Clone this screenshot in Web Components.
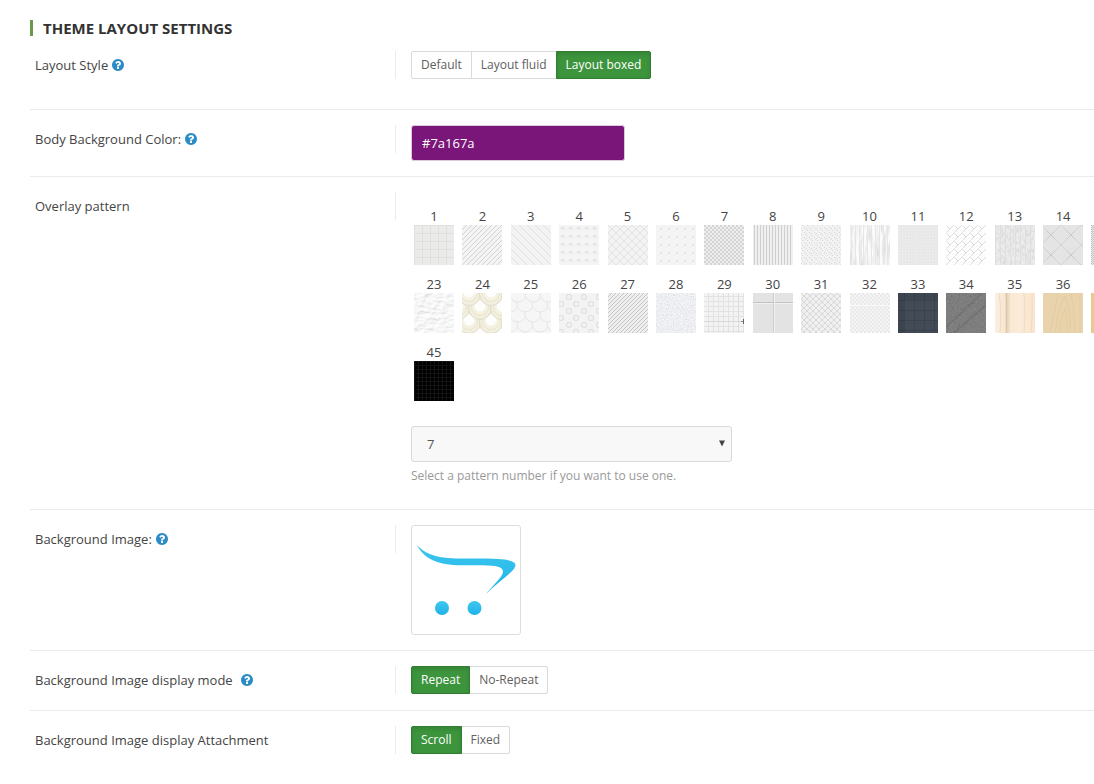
<!DOCTYPE html>
<html lang="en">
<head>
<meta charset="utf-8">
<title>Theme layout settings</title>
<style>
  body { margin: 0; background: #fff; color: #444; font: 13px/18px "Open Sans", sans-serif; }
</style>
</head>
<body>
<settings-panel heading="THEME LAYOUT SETTINGS">
  <setting-row label="Layout Style" help class="first">
    <button-group label="Layout Style" options="Default|Layout fluid|Layout boxed" value="Layout boxed"></button-group>
  </setting-row>
  <setting-row label="Body Background Color:" help>
    <color-field label="Body Background Color" value="#7a167a"></color-field>
  </setting-row>
  <setting-row label="Overlay pattern">
    <pattern-picker></pattern-picker>
  </setting-row>
  <setting-row label="Background Image:" help>
    <image-picker></image-picker>
  </setting-row>
  <setting-row label="Background Image display mode" help="wide">
    <button-group label="Background Image display mode" options="Repeat|No-Repeat" value="Repeat"></button-group>
  </setting-row>
  <setting-row label="Background Image display Attachment">
    <button-group label="Background Image display Attachment" options="Scroll|Fixed" value="Scroll"></button-group>
  </setting-row>
</settings-panel>

<script>
class SettingsPanel extends HTMLElement {
  constructor() {
    super();
    this.attachShadow({ mode: 'open' }).innerHTML = `
      <style>
        :host { display: block; padding: 20px 0 15px 30px; }
        h2 { margin: 0; border-left: 3px solid #6a994e; padding-left: 10px; font-size: 15px; line-height: 16px; font-weight: 700; color: #333; }
      </style>
      <section><h2>${this.getAttribute('heading')}</h2><slot></slot></section>`;
  }
}

class HelpIcon extends HTMLElement {
  constructor() {
    super();
    this.attachShadow({ mode: 'open' }).innerHTML = `
      <style>
        :host { display: inline-flex; color: #2b8bc6; }
        svg { display: block; }
      </style>
      <svg width="12" height="12" viewBox="128 128 1536 1536" fill="currentColor" role="img" aria-label="Help"><path d="M1024 1376v-192q0-14-9-23t-23-9h-192q-14 0-23 9t-9 23v192q0 14 9 23t23 9h192q14 0 23-9t9-23zM1280 704q0-88-55.500-163t-138.500-116-170-41q-243 0-371 213-15 24 8 42l132 100q7 6 19 6 16 0 25-12 53-68 86-92 34-24 86-24 48 0 85.500 26t37.500 59q0 38-20 61t-68 45q-63 28-115.500 86.500t-52.500 125.500v36q0 14 9 23t23 9h192q14 0 23-9t9-23q0-19 21.500-49.500t54.500-49.500q32-18 49-28.500t46-35 44.500-48 28-60.500 12.500-81zM1664 896q0 209-103 385.500t-279.500 279.500-385.500 103-385.500-103-279.500-279.500-103-385.500 103-385.500 279.500-279.500 385.500-103 385.500 103 279.500 279.500 103 385.500z"/></svg>`;
  }
}

class SettingRow extends HTMLElement {
  constructor() {
    super();
    const help = this.getAttribute('help');
    this.attachShadow({ mode: 'open' }).innerHTML = `
      <style>
        :host { display: grid; grid-template-columns: 365px minmax(0, 1fr); padding: 15px 0; border-top: 1px solid #ebebeb; }
        :host(.first) { border-top: 0; padding-bottom: 29px; }
        .label { display: flex; align-items: center; gap: 4px; height: 28px; padding-left: 5px; border-right: 1px solid #ebebeb; margin-right: -1px; }
        .label.wide { gap: 8px; }
        .control { padding-left: 16px; min-height: 29px; }
      </style>
      <div class="label ${help || ''}"><span>${this.getAttribute('label')}</span>${help === null ? '' : '<help-icon></help-icon>'}</div>
      <div class="control"><slot></slot></div>`;
  }
}

class ButtonGroup extends HTMLElement {
  constructor() {
    super();
    const value = this.getAttribute('value');
    this.attachShadow({ mode: 'open' }).innerHTML = `
      <style>
        :host { display: block; }
        div { display: flex; }
        button { height: 28px; margin: 0; padding: 0 9px; border: 1px solid #dadada; background: #fff; color: #606060; font: 12px/18px "Open Sans", sans-serif; }
        button + button { margin-left: -1px; }
        button:first-child { border-radius: 2px 0 0 2px; }
        button:last-child { border-radius: 0 2px 2px 0; }
        button[aria-pressed=true] { position: relative; background: #3c943c; border-color: #2f7d30; color: #fff; box-shadow: inset 0 2px 4px rgba(0,0,0,.12); }
      </style>
      <div role="group" aria-label="${this.getAttribute('label')}">${this.getAttribute('options').split('|').map(o =>
        `<button type="button" aria-pressed="${o === value}">${o}</button>`).join('')}</div>`;
    this.shadowRoot.querySelector('div').addEventListener('click', e => {
      if (e.target.tagName !== 'BUTTON') return;
      for (const b of this.shadowRoot.querySelectorAll('button')) b.setAttribute('aria-pressed', b === e.target);
    });
  }
}

class ColorField extends HTMLElement {
  constructor() {
    super();
    const v = this.getAttribute('value');
    this.attachShadow({ mode: 'open' }).innerHTML = `
      <style>
        :host { display: block; }
        input { display: block; box-sizing: border-box; width: 214px; height: 36px; margin: 0; padding: 0 10px; border: 1px solid #d9cdd9; border-radius: 3px; color: #fff; font: 13px/18px "Open Sans", sans-serif; }
      </style>
      <input type="text" aria-label="${this.getAttribute('label')}" value="${v}" style="background:${v}">`;
  }
}

/* A tile repeated over the whole 40px swatch. */
const tile = (w, h, bg, art, extra = '') =>
  `<defs><pattern id="p" width="${w}" height="${h}" patternUnits="userSpaceOnUse" ${extra}>${art}</pattern></defs><rect width="40" height="40" fill="${bg}"/><rect width="40" height="40" fill="url(#p)"/>`;
/* Monochrome grain over a base colour. */
const grain = (bg, freq, strength, dark = 0, oct = 2) =>
  `<defs><filter id="n" x="0" y="0" width="100%" height="100%" color-interpolation-filters="sRGB"><feTurbulence type="fractalNoise" baseFrequency="${freq}" numOctaves="${oct}"/><feColorMatrix values="0 0 0 0 ${dark} 0 0 0 0 ${dark} 0 0 0 0 ${dark} ${strength} 0 0 0 ${-strength * 0.4}"/></filter></defs><rect width="40" height="40" fill="${bg}"/><rect width="40" height="40" filter="url(#n)"/>`;
const line = (d, c, w = 1) => `<path d="${d}" stroke="${c}" stroke-width="${w}" fill="none"/>`;
const box = (x, y, w, h, c) => `<rect x="${x}" y="${y}" width="${w}" height="${h}" fill="${c}"/>`;
/* Overlapping fish scales, the upper rows painted over the lower ones. */
const scales = (rows, dx, paint) => rows.map(([x0, y]) =>
  [0, 1, 2, 3].map(i => paint(x0 + i * dx, y)).join('')).join('');

const PATTERNS = {
  1: tile(8, 8, '#ebebe9', box(0, 0, 1, 8, '#e0e0dd') + box(0, 0, 8, 1, '#e0e0dd')),
  2: tile(5, 5, '#f4f4f4', line('M-1 6L6-1M-1 1L1-1M4 6L6 4', '#d2d2d2')),
  3: tile(8, 8, '#f3f3f3', line('M-1-1L9 9', '#e0e0e0')),
  4: tile(8, 8, '#f4f4f4', box(2, 2, 4, 3, '#ebebeb') + box(2, 2, 2, 2, '#e1e1e1')),
  5: tile(8, 8, '#f3f3f3', line('M0 0L8 8M8 0L0 8', '#e1e1e1')),
  6: tile(8, 8, '#f4f4f4', box(4, 3, 2, 2, '#e5e5e5')),
  7: tile(4, 4, '#eeeeee', box(0, 0, 2, 2, '#d4d4d4') + box(2, 2, 2, 2, '#d4d4d4')),
  8: tile(3, 3, '#f0f0f0', box(1, 0, 1, 3, '#cecece')),
  9: tile(5, 5, '#f2f2f2', box(1, 0, 1, 1, '#d8d8d8') + box(3, 2, 1, 1, '#d6d6d6') + box(0, 3, 1, 1, '#dadada') + box(4, 4, 1, 1, '#e0e0e0')),
  10: grain('#fbfbfb', '.3 .06', .3) + tile(4, 40, 'none', box(1, 0, 1, 40, '#e6e6e6')),
  11: tile(3, 3, '#e9e9e9', box(0, 0, 1, 1, '#e5e5e5') + box(1, 2, 1, 1, '#eeeeee')),
  12: tile(8, 8, '#fdfdfd', line('M0 8L8 0M1 1L4 4M-1 1L1-1M7 9L9 7', '#dcdcdc')),
  13: grain('#ececec', '.45 .25', .3, .3) + tile(5, 40, 'none', box(0, 0, 1, 40, '#dfdfdf')),
  14: tile(20, 20, '#e4e4e4', line('M0 0L20 20M20 0L0 20', '#d4d4d4') + line('M6 0L14 0M10-4L10 4', 'none') + line('M-4-4L4 4M-4 4L4-4M16-4L24 4M16 4L24-4M-4 16L4 24M-4 24L4 16M16 16L24 24M16 24L24 16', '#c9c9c9'), 'patternTransform="translate(8 10)"'),
  15: tile(2, 2, '#e8e8e8', box(0, 0, 1, 1, '#bdbdbd') + box(1, 1, 1, 1, '#cccccc')),
  23: `<defs><filter id="n" x="0" y="0" width="100%" height="100%"><feTurbulence type="fractalNoise" baseFrequency=".16 .3" numOctaves="3"/><feDiffuseLighting surfaceScale="1" lighting-color="#ffffff"><feDistantLight azimuth="240" elevation="68"/></feDiffuseLighting></filter></defs><rect width="40" height="40" filter="url(#n)"/>`,
  24: box(0, 0, 40, 40, '#faf8f0') + scales([[-4, 43], [-15, 29], [-4, 15], [-15, 1]], 22, (x, y) =>
    `<circle cx="${x}" cy="${y}" r="11.500" fill="#f2efdd" stroke="#dedccf"/><circle cx="${x}" cy="${y - 1}" r="8.500" fill="#f5f2e2" stroke="#e8e4cd"/><circle cx="${x}" cy="${y - 2}" r="5.500" fill="#fdfdfb"/>`),
  25: box(0, 0, 40, 40, '#f6f6f6') + scales([[-8, 40], [-1, 31], [-8, 21], [-1, 11], [-8, 1]], 15, (x, y) =>
    `<circle cx="${x}" cy="${y}" r="8" fill="#f6f6f6" stroke="#e6e6e6"/>`),
  26: tile(15, 14, '#f3f3f3', '<g fill="#f1f1f1" stroke="#dadada"><rect x="1.500" y="1.500" width="5" height="5" rx="2"/><rect x="8.500" y="8.500" width="5" height="5" rx="2"/></g>', 'patternTransform="translate(6 0)"'),
  27: tile(4, 4, '#efefef', line('M-1 5L5-1M-1 1L1-1M3 5L5 3', '#c4c4c4')),
  28: grain('#f4f5f8', '.8', .45, .45),
  29: tile(5, 5, '#f3f3f3', box(4, 0, 1, 5, '#e2e2e2') + box(0, 3, 5, 1, '#e2e2e2')) + box(0, 28, 40, 1, '#d6d6d6') + box(34, 0, 1, 40, '#dcdcdc') + box(37, 28, 3, 1, '#888') + box(39, 26, 1, 5, '#666'),
  30: box(0, 0, 40, 40, '#e3e3e3') + box(0, 9, 40, 1, '#c2c2c2') + box(0, 10, 40, 1, '#f0f0f0') + box(20, 0, 1, 40, '#cecece') + box(21, 0, 1, 40, '#f2f2f2'),
  31: tile(6, 6, '#f0f0f0', line('M0 0L6 6M6 0L0 6', '#d8d8d8')),
  32: tile(4, 4, '#f5f5f5', box(0, 0, 2, 2, '#e9e9e9') + box(2, 2, 2, 2, '#e9e9e9')) + box(0, 12, 40, 1, '#fafafa'),
  33: tile(10, 10, '#434b57', box(6, 0, 1, 10, '#3a424d') + box(0, 7, 10, 1, '#3a424d')) + box(0, 0, 6, 40, 'rgba(30,38,48,.2)') + box(6, 0, 34, 7, 'rgba(30,38,48,.15)'),
  34: grain('#828282', '.6', .5, .2) + line('M8 40L40 12M0 34L36 0', 'rgba(60,60,60,.12)', 2),
  35: `<defs><linearGradient id="g"><stop stop-color="#fbf0e1"/><stop offset=".25" stop-color="#f7e7d2"/><stop offset=".29" stop-color="#dcc4a8"/><stop offset=".34" stop-color="#f8e8d4"/><stop offset=".6" stop-color="#fbebd9"/><stop offset="1" stop-color="#f8e5cf"/></linearGradient></defs><rect width="40" height="40" fill="url(#g)"/>` + line('M4 0Q7 18 5 40M29 0Q31 20 29 40M37 0Q38 22 36 40', '#f0dac0') + line('M14 0V40', '#ead3b5'),
  36: box(0, 0, 40, 40, '#e9d3ad') + line('M12 40Q15 15 22 3Q28 16 27 40M16 40Q18 24 22 16Q25 27 24 40M7 40Q12 18 15 0M32 40Q32 18 28 0M37 40V0', '#e4cba1'),
  37: box(0, 0, 40, 40, '#e9c98f'),
  45: tile(4, 4, '#000', box(0, 0, 1, 4, '#161616') + box(0, 0, 4, 1, '#121212'))
};

class PatternSwatch extends HTMLElement {
  constructor() {
    super();
    const n = this.getAttribute('number');
    this.attachShadow({ mode: 'open' }).innerHTML = `
      <style>
        :host { display: inline-block; box-sizing: border-box; width: 45px; height: 68px; padding: 0 2px 0 3px; text-align: center; vertical-align: top; }
        span { display: block; height: 18px; }
        svg { display: block; overflow: hidden; }
      </style>
      <span>${this.hasAttribute('bare') ? '' : n}</span><svg width="40" height="40" viewBox="0 0 40 40" role="img" aria-label="Pattern ${n}">${PATTERNS[n]}</svg>`;
  }
}

class PatternPicker extends HTMLElement {
  constructor() {
    super();
    const range = (a, b) => Array.from({ length: b - a + 1 }, (_, i) => a + i);
    const rows = [range(1, 15), range(23, 37), [45]];
    const bare = [15, 37];
    this.attachShadow({ mode: 'open' }).innerHTML = `
      <style>
        :host { display: block; padding: 15px 0 9px; }
        .row { height: 68px; white-space: nowrap; overflow: hidden; }
        .pick { position: relative; width: 321px; margin-top: 15px; }
        select { appearance: none; display: block; box-sizing: border-box; width: 100%; height: 36px; margin: 0; padding: 0 15px; border: 1px solid #d9d9d9; border-radius: 3px; background: #f8f8f8; color: #555; font: 13px/18px "Open Sans", sans-serif; }
        .pick svg { position: absolute; right: 7px; top: 14px; pointer-events: none; }
        p { margin: 5px 0 0; font-size: 12px; color: #999; }
      </style>
      ${rows.map(r => `<div class="row">${r.map(n => `<pattern-swatch number="${n}"${bare.includes(n) ? ' bare' : ''}></pattern-swatch>`).join(' ')}</div>`).join('')}
      <div class="pick">
        <select aria-label="Overlay pattern" aria-describedby="hint"><option>7</option></select>
        <svg width="6" height="7" viewBox="0 0 6 7" aria-hidden="true"><path d="M0 0.500H6L3 6.500Z" fill="#444"/></svg>
      </div>
      <p id="hint">Select a pattern number if you want to use one.</p>`;
  }
}

class ImagePicker extends HTMLElement {
  constructor() {
    super();
    this.attachShadow({ mode: 'open' }).innerHTML = `
      <style>
        :host { display: block; }
        button { display: block; margin: 0; padding: 4px; border: 1px solid #ddd; border-radius: 3px; background: #fff; }
        svg { display: block; }
      </style>
      <button type="button" aria-label="Choose background image">
        <svg width="100" height="100" viewBox="0 0 100 100" aria-hidden="true">
          <defs><linearGradient id="b" x1="0" y1="0" x2="0" y2="1"><stop stop-color="#3cc8ee"/><stop offset="1" stop-color="#1fb2e8"/></linearGradient></defs>
          <g fill="url(#b)">
            <path d="M1 15C8 23 18 27.500 36 28.300C48 29 66 28.200 82 29C93 29.600 99.500 31.500 99.500 35C99.500 41 85 49 70 64C76 56 87 47 87 41.500C87 37 80 35.500 67 35.300C56 35 46 36 33 34.500C15 32.500 6 25 1 15Z"/>
            <circle cx="26" cy="78" r="7"/><circle cx="58.500" cy="78" r="7"/>
          </g>
        </svg>
      </button>`;
  }
}

customElements.define('help-icon', HelpIcon);
customElements.define('pattern-swatch', PatternSwatch);
customElements.define('button-group', ButtonGroup);
customElements.define('color-field', ColorField);
customElements.define('pattern-picker', PatternPicker);
customElements.define('image-picker', ImagePicker);
customElements.define('setting-row', SettingRow);
customElements.define('settings-panel', SettingsPanel);
</script>
</body>
</html>
